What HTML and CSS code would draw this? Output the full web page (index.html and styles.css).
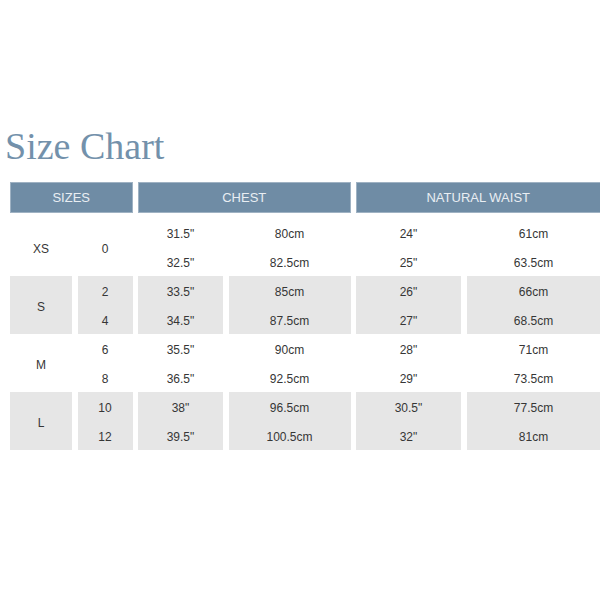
FILE: index.html
```html
<!DOCTYPE html>
<html>
<head>
<meta charset="utf-8">
<link rel="stylesheet" href="styles.css">
</head>
<body>
<div class="page">
  <h1 class="title">Size Chart</h1>
  <div class="chart">
    <div class="head">
      <div class="hcell span2">SIZES</div>
      <div class="hcell span2">CHEST</div>
      <div class="hcell span2">NATURAL WAIST</div>
    </div>
    <div class="group">
      <div class="cell"><span>XS</span></div>
      <div class="cell"><span>0</span></div>
      <div class="cell"><span>31.5"</span><span>32.5"</span></div>
      <div class="cell"><span>80cm</span><span>82.5cm</span></div>
      <div class="cell"><span>24"</span><span>25"</span></div>
      <div class="cell"><span>61cm</span><span>63.5cm</span></div>
    </div>
    <div class="group shade">
      <div class="cell"><span>S</span></div>
      <div class="cell"><span>2</span><span>4</span></div>
      <div class="cell"><span>33.5"</span><span>34.5"</span></div>
      <div class="cell"><span>85cm</span><span>87.5cm</span></div>
      <div class="cell"><span>26"</span><span>27"</span></div>
      <div class="cell"><span>66cm</span><span>68.5cm</span></div>
    </div>
    <div class="group">
      <div class="cell"><span>M</span></div>
      <div class="cell"><span>6</span><span>8</span></div>
      <div class="cell"><span>35.5"</span><span>36.5"</span></div>
      <div class="cell"><span>90cm</span><span>92.5cm</span></div>
      <div class="cell"><span>28"</span><span>29"</span></div>
      <div class="cell"><span>71cm</span><span>73.5cm</span></div>
    </div>
    <div class="group shade">
      <div class="cell"><span>L</span></div>
      <div class="cell"><span>10</span><span>12</span></div>
      <div class="cell"><span>38"</span><span>39.5"</span></div>
      <div class="cell"><span>96.5cm</span><span>100.5cm</span></div>
      <div class="cell"><span>30.5"</span><span>32"</span></div>
      <div class="cell"><span>77.5cm</span><span>81cm</span></div>
    </div>
  </div>
</div>
</body>
</html>
```
FILE: styles.css
```css
html, body {
  margin: 0;
  padding: 0;
  background: #ffffff;
  overflow: hidden;
}
.page {
  width: 600px;
  height: 600px;
  padding-top: 126px;
  box-sizing: border-box;
  overflow: hidden;
}
.title {
  margin: 0 0 16px 5px;
  font-family: "Liberation Serif", "DejaVu Serif", serif;
  font-weight: normal;
  font-size: 38px;
  line-height: 40px;
  height: 40px;
  color: #7391ab;
}
.chart {
  margin-left: 10px;
  width: 590px;
}
.head, .group {
  display: grid;
  grid-template-columns: 62px 55px 85px 122px 105px 134px;
  column-gap: 5.5px;
}
.head {
  height: 31px;
  margin-bottom: 5px;
}
.hcell {
  background: #6f8ca5;
  border: 1px solid #9fb2c3;
  color: #e9eef3;
  font-family: "Liberation Sans", Arial, sans-serif;
  font-size: 13px;
  display: flex;
  align-items: center;
  justify-content: center;
}
.span2 {
  grid-column: span 2;
}
.group {
  height: 58px;
}
.cell {
  display: flex;
  flex-direction: column;
  justify-content: center;
  align-items: center;
  font-family: "Liberation Sans", Arial, sans-serif;
  font-size: 12px;
  color: #363636;
}
.cell span {
  display: block;
  height: 29px;
  line-height: 29px;
  padding-top: 2px;
  box-sizing: border-box;
}
.shade .cell {
  background: #e6e6e6;
}
```
